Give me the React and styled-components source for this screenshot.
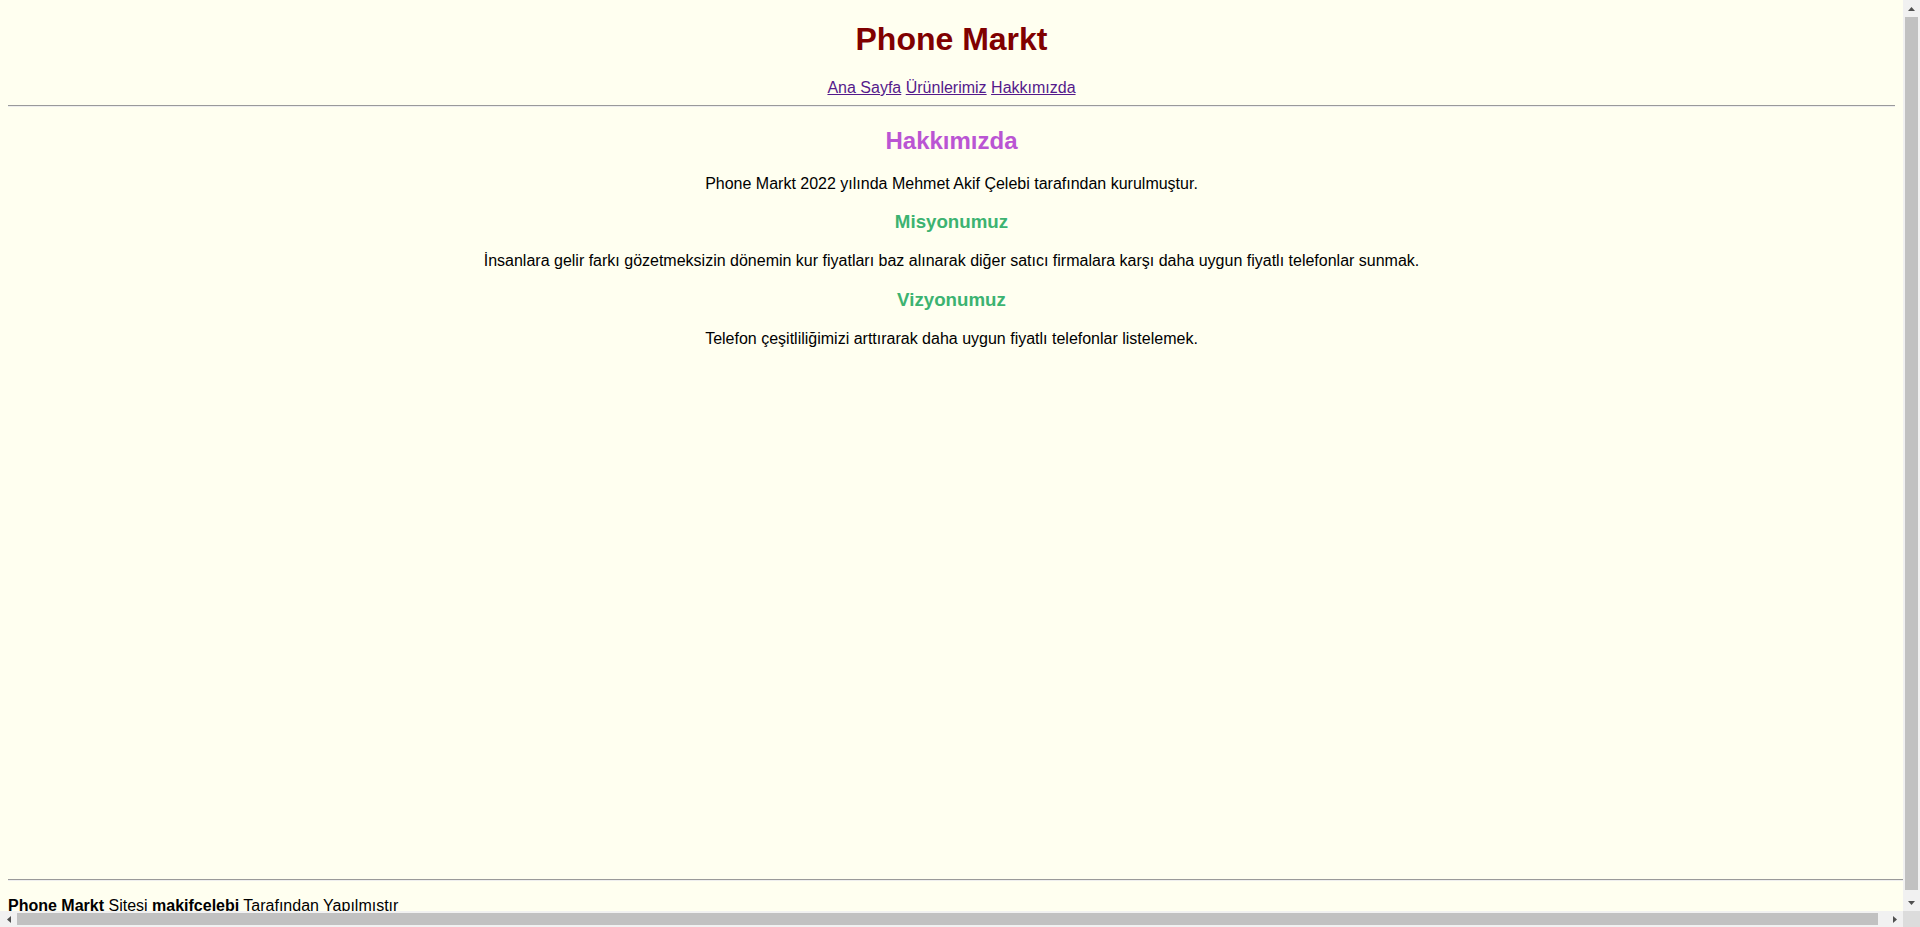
import React from 'react';
import styled, { createGlobalStyle } from 'styled-components';

const GlobalStyle = createGlobalStyle`
    html, body {
        margin: 0;
        padding: 0;
        overflow: hidden;
    }
    body {
        background-color: #fffff0;
        font-family: "Liberation Sans", Arial, sans-serif;
        color: #000;
    }
`;

const Window = styled.div`
    display: grid;
    grid-template-columns: 1fr 17px;
    grid-template-rows: 1fr 16px;
    width: 100vw;
    height: 100vh;
`;

const Viewport = styled.div`
    overflow: hidden;
    background-color: #fffff0;
`;

const ScrollBar = styled.div`
    display: flex;
    flex-direction: ${({ vertical }) => (vertical ? 'column' : 'row')};
    background-color: #f1f1f1;
`;

const ScrollButton = styled.div`
    flex: 0 0 ${({ size }) => size}px;
    display: flex;
    align-items: center;
    justify-content: center;
`;

const Track = styled.div`
    flex: 1;
    display: flex;
    padding: ${({ vertical }) => (vertical ? '0 2px 4px' : '2px 8px 2px 0')};
`;

const Thumb = styled.div`
    flex: 1;
    background-color: #c1c1c1;
`;

const Corner = styled.div`
    background-color: #dcdcdc;
`;

const Body = styled.div`
    margin: 8px 8px 0;
`;

const Header = styled.header`
    text-align: center;
`;

const Title = styled.h1`
    font-size: 32px;
    color: #800000;
    margin: 21.44px 0 20.44px;
`;

const Nav = styled.nav`
    font-size: 16px;
`;

const NavLink = styled.a`
    color: #551a8b;
    text-decoration: underline;
`;

const Divider = styled.hr`
    margin: 8px 0;
    border: none;
    border-top: 1px solid #9a9a9a;
    border-bottom: 1px solid #eeeeee;
    height: 0;
`;

const Main = styled.main`
    text-align: center;
    min-height: 744px;
`;

const SectionTitle = styled.h2`
    font-size: 24px;
    color: #ba55d3;
    margin: 19.92px 0;
`;

const SubTitle = styled.h3`
    font-size: 18.72px;
    color: #3cb371;
    margin: 18.72px 0;
`;

const Text = styled.p`
    font-size: 16px;
    margin: 16px 0;
`;

const Footer = styled.footer`
    width: calc(100% + 8px);
`;

const Credit = styled.p`
    font-size: 16px;
    margin: 16px 0 0;
`;

const Arrow = ({ dir }) => {
    const points = {
        up: '0,4 7,4 3.5,0',
        down: '0,0 7,0 3.5,4',
        left: '4,0 4,7 0,3.5',
        right: '0,0 0,7 4,3.5',
    }[dir];
    const wide = dir === 'up' || dir === 'down';
    return (
        <svg width={wide ? 7 : 4} height={wide ? 4 : 7} viewBox={wide ? '0 0 7 4' : '0 0 4 7'}>
            <polygon points={points} fill="#505050" />
        </svg>
    );
};

const App = () => {
    return (
        <>
            <GlobalStyle />
            <Window>
                <Viewport>
                    <Body>
                        <Header>
                            <Title>Phone Markt</Title>
                            <Nav>
                                <NavLink href="#">Ana Sayfa</NavLink>{' '}
                                <NavLink href="#">Ürünlerimiz</NavLink>{' '}
                                <NavLink href="#">Hakkımızda</NavLink>
                            </Nav>
                        </Header>
                        <Divider />
                        <Main>
                            <SectionTitle>Hakkımızda</SectionTitle>
                            <Text>Phone Markt 2022 yılında Mehmet Akif Çelebi tarafından kurulmuştur.</Text>
                            <SubTitle>Misyonumuz</SubTitle>
                            <Text>İnsanlara gelir farkı gözetmeksizin dönemin kur fiyatları baz alınarak diğer satıcı firmalara karşı daha uygun fiyatlı telefonlar sunmak.</Text>
                            <SubTitle>Vizyonumuz</SubTitle>
                            <Text>Telefon çeşitliliğimizi arttırarak daha uygun fiyatlı telefonlar listelemek.</Text>
                        </Main>
                        <Footer>
                            <Divider />
                            <Credit>
                                <b>Phone Markt</b> Sitesi <b>makifcelebi</b> Tarafından Yapılmıştır
                            </Credit>
                        </Footer>
                    </Body>
                </Viewport>
                <ScrollBar vertical>
                    <ScrollButton size={17}><Arrow dir="up" /></ScrollButton>
                    <Track vertical><Thumb /></Track>
                    <ScrollButton size={17}><Arrow dir="down" /></ScrollButton>
                </ScrollBar>
                <ScrollBar>
                    <ScrollButton size={17}><Arrow dir="left" /></ScrollButton>
                    <Track><Thumb /></Track>
                    <ScrollButton size={17}><Arrow dir="right" /></ScrollButton>
                </ScrollBar>
                <Corner />
            </Window>
        </>
    );
};

export default App;
